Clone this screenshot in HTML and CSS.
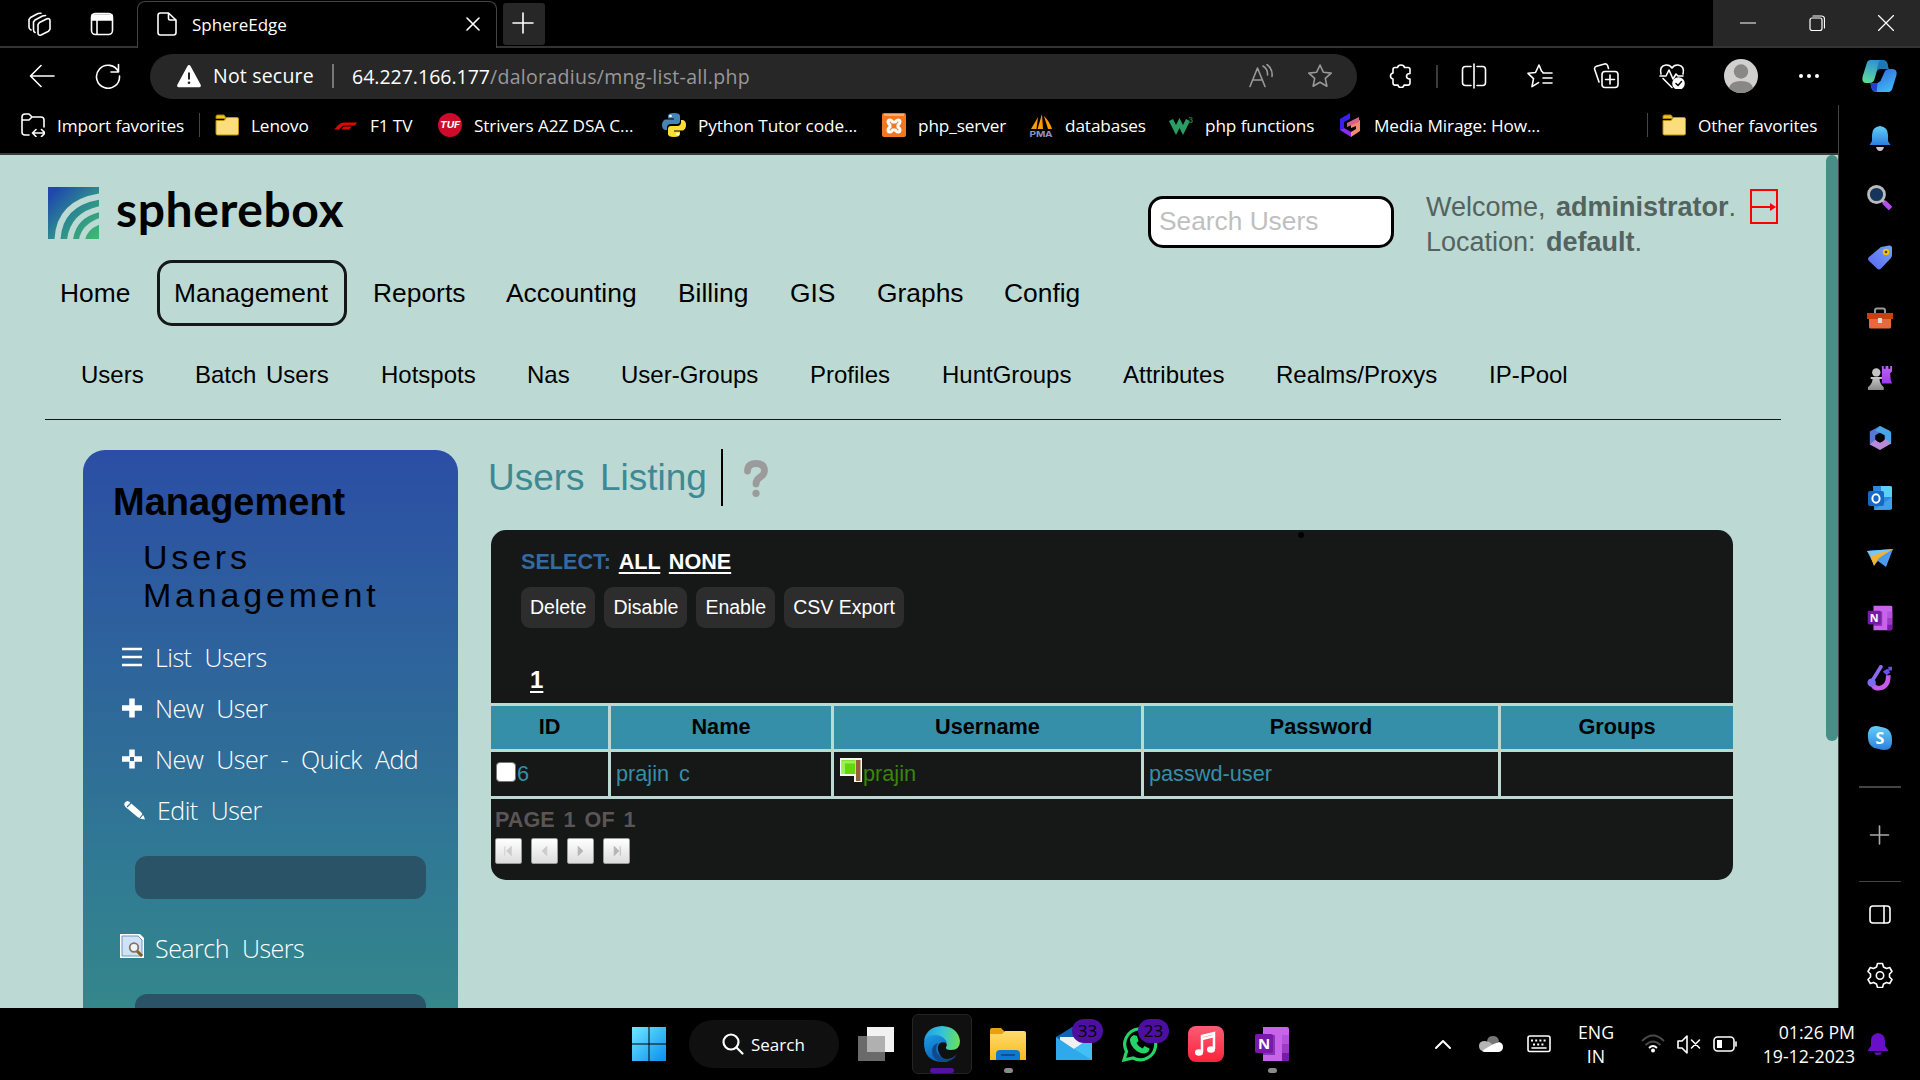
FILE: index.html
```html
<!DOCTYPE html>
<html lang="en">
<head>
<meta charset="utf-8">
<title>SphereEdge</title>
<link rel="stylesheet" href="styles.css">
</head>
<body>
<svg width="0" height="0" class="defs">
  <defs>
    <linearGradient id="gLogo" x1="0" y1="0" x2="1" y2="1"><stop offset="0.1" stop-color="#2048ac"/><stop offset="0.5" stop-color="#2b8792"/><stop offset="1" stop-color="#3fbc6c"/></linearGradient>
    <linearGradient id="gBlue" x1="0" y1="0" x2="1" y2="1"><stop offset="0" stop-color="#6fe8ff"/><stop offset="1" stop-color="#0a8df0"/></linearGradient>
    <linearGradient id="gCopA" x1="0.6" y1="0" x2="0.2" y2="1"><stop offset="0" stop-color="#2b8fd8"/><stop offset="1" stop-color="#62d99a"/></linearGradient>
    <linearGradient id="gCopB" x1="0" y1="0" x2="0.6" y2="1"><stop offset="0" stop-color="#2f61dc"/><stop offset="1" stop-color="#40b4f4"/></linearGradient>
    <linearGradient id="gBell" x1="0" y1="0" x2="0" y2="1"><stop offset="0" stop-color="#62cff8"/><stop offset="1" stop-color="#2c7fdc"/></linearGradient>
    <linearGradient id="gTag" x1="0" y1="1" x2="1" y2="0"><stop offset="0" stop-color="#5a64f0"/><stop offset="1" stop-color="#6fa4f6"/></linearGradient>
    <linearGradient id="gPurple" x1="0" y1="0" x2="0" y2="1"><stop offset="0" stop-color="#b866f0"/><stop offset="1" stop-color="#a236ee"/></linearGradient>
    <linearGradient id="gGrey" x1="0" y1="0" x2="0" y2="1"><stop offset="0" stop-color="#c8c8c8"/><stop offset="1" stop-color="#8a8a8a"/></linearGradient>
    <linearGradient id="gEdgeA" x1="0" y1="0.3" x2="1" y2="0.4"><stop offset="0" stop-color="#1d9fe0"/><stop offset="0.5" stop-color="#35c3d8"/><stop offset="1" stop-color="#6ae05a"/></linearGradient>
    <linearGradient id="gEdgeB" x1="0" y1="0" x2="0.4" y2="1"><stop offset="0" stop-color="#1b9de2"/><stop offset="1" stop-color="#0b62bd"/></linearGradient>
    <linearGradient id="gFold" x1="0" y1="0" x2="0" y2="1"><stop offset="0" stop-color="#ffdc6e"/><stop offset="1" stop-color="#f8b91c"/></linearGradient>
    <linearGradient id="gMusic" x1="0" y1="0" x2="0" y2="1"><stop offset="0" stop-color="#fb5c74"/><stop offset="1" stop-color="#fa233b"/></linearGradient>
    <symbol id="folder" viewBox="0 0 24 24"><path d="M1 5.500V3.500Q1 2 2.500 2H9l2.500 3.500z" fill="#f0c419" stroke="#a98207"/><path d="M1 7.500H9L11.500 4.500H22q1.500 0 1.500 1.500V20.500q0 1.500-1.500 1.500H2.500Q1 22 1 20.500z" fill="#fbdd7c" stroke="#b98f12"/></symbol>
    <symbol id="onenote" viewBox="0 0 36 36"><path d="M9 1h24q2 0 2 2v30q0 2-2 2H9z" fill="#c864ea"/><path d="M28 18h7v9h-7z" fill="#9a3cc4"/><path d="M28 27h7v6q0 2-2 2h-5z" fill="#7719aa"/><path d="M28 9h7v9h-7z" fill="#b552dc"/><rect x="9" y="9" width="12" height="20" fill="#5d1690" opacity=".6"/><rect x="1" y="8" width="18" height="19" rx="2" fill="#7719aa"/><text x="10" y="23" text-anchor="middle" font-size="15" font-weight="700" fill="#fff" font-family="Open Sans, sans-serif">N</text></symbol>
  </defs>
</svg>

<div class="desktop">
  <header class="tabstrip">
    <div class="tab-lead">
      <svg class="ic w24" viewBox="0 0 24 24"><path d="M12.500 10.500L20 6.800q3-.8 3 2v8.400l-1.500 2L14 23q-3 .8-3-2v-8.500zM8 20.500q-1.500-.8-1.500-3V10l1.500-2 7.500-4 3-.5M4 18q-2-.8-2-3V7.500l1.500-2L11 1.500l3-.3"/></svg>
      <svg class="ic w24" viewBox="0 0 24 24"><rect x="1.500" y="1.500" width="21" height="21" rx="4"/><path d="M2 3h20v5H2z" fill="#fff"/><path d="M7 8v14"/></svg>
    </div>
    <div class="tab">
      <svg class="ic w24" viewBox="0 0 24 24"><path d="M5.500 1h8L21 8v12.500q0 2.500-2.500 2.500h-13Q3 23 3 20.500v-17Q3 1 5.500 1zM13.500 1v5.500q0 1.500 1.500 1.500h6"/></svg>
      <span>SphereEdge</span>
      <svg class="ic w14" viewBox="0 0 14 14"><path d="M1 1l12 12M13 1L1 13"/></svg>
    </div>
    <div class="tab-rest">
      <button class="newtab"><svg class="ic w22" viewBox="0 0 22 22"><path d="M11 1v20M1 11h20"/></svg></button>
      <div class="winctl">
        <svg class="ic thin w16" viewBox="0 0 16 16"><path d="M0 8h16"/></svg>
        <svg class="ic thin w16" viewBox="0 0 16 16"><rect x="1" y="3" width="12" height="12.500" rx="2"/><path d="M4 1h8.500q3 0 3 3v9"/></svg>
        <svg class="ic thin w16" viewBox="0 0 16 16"><path d="M.5.5l15 15M15.500.5l-15 15"/></svg>
      </div>
    </div>
  </header>

  <div class="toolbar">
    <svg class="ic w26 back" viewBox="0 0 26 26"><path d="M25 13H2M12 2.500L1.500 13 12 23.500"/></svg>
    <svg class="ic w26 reload" viewBox="0 0 26 26"><path d="M23.500 9A11.500 11.500 0 1 0 24.500 13M23.500 1.500V9H16"/></svg>
    <div class="address">
      <svg class="w26 warn" viewBox="0 0 26 26"><path d="M13 2q1 0 1.500 1l10.300 19q.7 2-1.300 2.200h-21Q.5 24 1.200 22L11.500 3Q12 2 13 2z" fill="#fff"/><path d="M13 9.500v7" stroke="#222" stroke-width="2" /><circle cx="13" cy="19.800" r="1.300" fill="#222"/></svg>
      <span class="insecure">Not secure</span>
      <span class="url">64.227.166.177<i>/daloradius/mng-list-all.php</i></span>
      <svg class="ic dim w24 aloud" viewBox="0 0 24 24"><path d="M1 22.500L8.500 4 16 22.500M3.500 16h10M14 2q5 3 4.500 9M18 .5q6 4.500 5 12"/></svg>
      <svg class="ic dim w26 star" viewBox="0 0 26 26"><path d="M13 2l3.300 7.200 7.900.9-5.900 5.300 1.600 7.800L13 19.300l-6.900 3.900 1.600-7.800L1.800 10.100l7.900-.9z"/></svg>
    </div>
    <div class="tools">
      <svg class="ic w24" viewBox="0 0 24 24"><path d="M8.500 3.500q.5-2.500 3.500-2.500t3.500 2.500h3.500q2 0 2 2v4q-3.500.3-3.500 2.800t3.500 2.800v4q0 2-2 2h-4q-.4 2.500-3 2.500t-3-2.500H6q-2 0-2-2v-4q-2.500-.5-2.500-3T4 9V5.500q0-2 2-2z"/></svg>
      <i class="sep"></i>
      <svg class="ic w26" viewBox="0 0 26 26"><path d="M13 1v24M10 3.500H4.500q-3 0-3 3v13q0 3 3 3H10M16 3.500h5.500q3 0 3 3v13q0 3-3 3H16"/></svg>
      <svg class="ic w26" viewBox="0 0 26 26"><path d="M14.500 8l-2.500-6-3.500 7.500-7.500.8 5.500 5.300-1.500 8 6.500-4M16 10h9M16 15h9M16 20h9M16.500 10l-2-2"/></svg>
      <svg class="ic w26" viewBox="0 0 26 26"><rect x="9" y="8.500" width="16" height="16" rx="3"/><path d="M17 12v9M12.500 16.500h9M6 19L1.700 6.500q-.7-2.500 1.800-3.300l8-2.200q2.500-.6 3.200 1.800l.8 2.700"/></svg>
      <svg class="ic w26" viewBox="0 0 26 26"><path d="M2 11q-2-8 5-9 4-.3 6 3 2-3.300 6-3 7 1 5 9M1 13h6l3-6 4 9 3-5 2 2h5M4 15.500l9 9"/><circle cx="19.500" cy="20.500" r="5.500" fill="#fff"/><path d="M17 20.500l2 2 3.500-4" stroke="#111"/></svg>
      <svg class="avatar" viewBox="0 0 34 34"><circle cx="17" cy="17" r="17" fill="#d2d0ce"/><circle cx="17" cy="12.500" r="7.200" fill="#8a8886"/><path d="M5 29q1.500-7 12-7t12 7q-5 5-12 5T5 29z" fill="#8a8886"/></svg>
      <svg class="w22" viewBox="0 0 22 22" fill="#fff"><circle cx="3" cy="11" r="2"/><circle cx="11" cy="11" r="2"/><circle cx="19" cy="11" r="2"/></svg>
    </div>
    <svg class="copilot" viewBox="0 0 36 34"><path d="M9 1h12q4 0 5 4l1 5-7-1-4 1-3 10q-1 4-5 4H5q-5 0-4-6L5 5q1-4 4-4z" fill="url(#gCopA)"/><path d="M27 33H15q-4 0-5-4l-1-5 7 0 3-2 4-9q1-3 5-3h3q5 0 4 6l-4 13q-1 4-4 4z" fill="url(#gCopB)"/><path d="M20 1q5 0 6 4l1 5h-9l-3 2 2-8q.7-3 3-3z" fill="#1e77b0"/><path d="M9 24h7l-1 9q-4-1-5-4z" fill="#233ed0"/></svg>
  </div>

  <div class="middle">
    <div class="browser">
      <nav class="bookmarks">
        <a><svg class="ic w24" viewBox="0 0 24 24"><path d="M8 22H4q-3 0-3-3V4q0-3 3-3h4l3 3h9q3 0 3 3v7M1 7h7l3-3M12 20h12M15 16.500L11.500 20l3.500 3.500M20.500 16.500L24 20l-3.500 3.500"/></svg>Import favorites</a>
        <a><svg class="w24"><use href="#folder"/></svg>Lenovo</a>
        <a><svg class="w24" viewBox="0 0 24 24"><path d="M0 16.500L5 11.500q2-2 5-2h13l-2 3H11q-2 0-3 1l-3 3zM10 13.500h8l-3 3H7z" fill="#e10600"/></svg>F1 TV</a>
        <a><svg class="w24" viewBox="0 0 24 24"><circle cx="12" cy="12" r="12" fill="#cc0c2a"/><text x="12" y="15.300" text-anchor="middle" textLength="20" lengthAdjust="spacingAndGlyphs" font-size="9" font-style="italic" font-weight="700" fill="#fff" font-family="Inter, sans-serif">TUF</text></svg>Strivers A2Z DSA C...</a>
        <a><svg class="w24" viewBox="0 0 24 24"><path d="M12 0q6 0 6 3v5q0 3-3 3H9q-4 0-4 4v2H3q-3-1-3-5t3-5.500h9V5.500H6V3q0-3 6-3z" fill="#4584b6"/><path d="M12 24q-6 0-6-3v-5q0-3 3-3h6q4 0 4-4V7h2q3 1 3 5t-3 5.500h-9v1h6V21q0 3-6 3z" fill="#ffde33"/><circle cx="8.500" cy="3" r="1.300" fill="#fff"/><circle cx="15.500" cy="21" r="1.300" fill="#fff"/></svg>Python Tutor code...</a>
        <a><svg class="w24" viewBox="0 0 24 24"><rect width="24" height="24" rx="2" fill="#f37623"/><path d="M6 9q0-2 2-2 1.500 0 2.500 2h3q1-2 2.500-2 2 0 2 2 0 1.500-2 3v2q2 1.500 2 3 0 2-2 2-1.500 0-2.500-2h-3q-1 2-2.500 2-2 0-2-2 0-1.500 2-3v-2q-2-1.500-2-3z" fill="none" stroke="#fff" stroke-width="3" stroke-linejoin="round"/><path d="M2 2h20" stroke="#ffc08a" stroke-width="1.500"/></svg>php_server</a>
        <a><svg class="w24" viewBox="0 0 24 24"><path d="M2 16L9 4 7.500 16zM8.500 16L13 1l1 15zM15 3q6 6 8 13h-4z" fill="#f89c0e"/><text x="12" y="23.500" text-anchor="middle" textLength="23" lengthAdjust="spacingAndGlyphs" font-size="8" font-weight="700" fill="#8f92c4" font-family="Inter, sans-serif">PMA</text></svg>databases</a>
        <a><svg class="w24" viewBox="0 0 24 24"><path d="M2 7l5 10 3.500-7L14 17l5-10" fill="none" stroke="#2a9d64" stroke-width="4.500"/><text x="19" y="10" font-size="8" font-weight="700" fill="#1d7044" font-family="Inter, sans-serif">3</text></svg>php functions</a>
        <a><svg class="w24" viewBox="0 0 24 24"><path d="M11 0v6L5 9v6l-4 2V6z" fill="#3b1df5"/><path d="M1 17l4-2 7 4v5z" fill="#8b2cf5"/><path d="M12 24v-5l5-3v-3l-5 2v-4l9-4v11z" fill="#f58a6c"/><path d="M8 10l12-6v5L8 14z" fill="#d6628c"/></svg>Media Mirage: How...</a>
        <a class="other"><svg class="w24"><use href="#folder"/></svg>Other favorites</a>
      </nav>

      <main class="page">
        <div class="content">
          <div class="top">
            <div class="brand">
              <svg class="mark" viewBox="0 0 51 52"><path d="M0 0h51v52H0z" fill="url(#gLogo)"/><g fill="none" stroke="#bdd9d3" stroke-width="6"><path d="M9.500 53Q11 16 52 9.500"/><path d="M22 53Q25 28 52 22"/><path d="M34 53Q36 40 52 34"/></g></svg>
              <span>spherebox</span>
            </div>
            <div class="search">Search Users</div>
            <div class="welcome">
              <div>Welcome, <b>administrator</b>.</div>
              <div>Location: <b>default</b>.</div>
            </div>
            <svg class="logout" viewBox="0 0 28 35"><rect x="1" y="1" width="26" height="33" fill="none" stroke="#f00" stroke-width="2"/><path d="M0 18h22" stroke="#f00" stroke-width="2"/><path d="M20 14l6 4-6 4z" fill="#f00"/></svg>
          </div>
          <nav class="mainnav"><a>Home</a><a class="active">Management</a><a>Reports</a><a>Accounting</a><a>Billing</a><a>GIS</a><a>Graphs</a><a>Config</a></nav>
          <nav class="subnav"><a>Users</a><a>Batch Users</a><a>Hotspots</a><a>Nas</a><a>User-Groups</a><a>Profiles</a><a>HuntGroups</a><a>Attributes</a><a>Realms/Proxys</a><a>IP-Pool</a></nav>
          <div class="columns">
            <aside class="card">
              <h2>Management</h2>
              <h3>Users<br>Management</h3>
              <ul>
                <li><svg class="w24" viewBox="0 0 24 24"><path d="M2 4h20M2 12h20M2 20h20" stroke="#fff" stroke-width="2.500"/></svg>List Users</li>
                <li><svg class="w24" viewBox="0 0 24 24"><path d="M12 2.500v19M2 12h20" stroke="#fff" stroke-width="5.500"/></svg>New User</li>
                <li><svg class="w24" viewBox="0 0 24 24"><path d="M12 2.500v19M2 12h20" stroke="#fff" stroke-width="5.500"/><path d="M10 10h4v4h-4z" fill="#306a98"/></svg>New User - Quick Add</li>
                <li class="edit"><svg class="w24" viewBox="0 0 24 24"><path d="M2.500 5q2.500-3 4.500-1.500L19 14q3 3.500 4 7.500-5-.5-7.500-2.500L3.500 9q-2-2-1-4z" fill="#fff"/><path d="M5 9l5-5M18 20l4-5" stroke="#30709a" stroke-width="1.200"/></svg>Edit User</li>
              </ul>
              <div class="field"></div>
              <ul class="second">
                <li><svg class="w24" viewBox="0 0 24 24"><path d="M0 0h20l4 4v20H0z" fill="#fff"/><path d="M2 2h16l4 4v16H2z" fill="#cfe2f8" stroke="#6c94c0"/><path d="M17 17l5 5" stroke="#8b5a2b" stroke-width="3"/><circle cx="14" cy="13.500" r="4.300" fill="#eef5fc" stroke="#8a7260" stroke-width="1.800"/></svg>Search Users</li>
              </ul>
              <div class="field"></div>
            </aside>
            <section class="listing">
              <h1><span>Users Listing</span><svg class="help" viewBox="0 0 24 37"><path d="M3.500 11Q3.500 3.500 12 3.500t8.500 7q0 4-4.200 6.500t-4.300 7" fill="none" stroke="#9b9b9b" stroke-width="6.800" stroke-linecap="round"/><circle cx="12" cy="33.300" r="3.600" fill="#9b9b9b"/></svg></h1>
              <div class="panel">
                <div class="panelhead">
                  <div class="select">SELECT: <u>ALL</u> <u>NONE</u></div>
                  <div class="actions"><button>Delete</button><button>Disable</button><button>Enable</button><button>CSV Export</button></div>
                  <div class="pageno"><u>1</u></div>
                  <i class="dot"></i>
                </div>
                <div class="row head"><div>ID</div><div>Name</div><div>Username</div><div>Password</div><div>Groups</div></div>
                <div class="row body">
                  <div><i class="check"></i>6</div><div>prajin c</div>
                  <div class="user"><svg class="flag" viewBox="0 0 22 24"><path d="M0 0h22v24h-8v-6H0z" fill="#f4f8ee"/><path d="M1.500 2h14v14h-14z" fill="#62d80c"/><path d="M2 2.500h13v3H5V16H2z" fill="#9bee58"/><path d="M16 2h4.500v21H16z" fill="#936137"/></svg>prajin</div>
                  <div>passwd-user</div><div></div>
                </div>
                <div class="panelfoot">
                  <div>PAGE 1 OF 1</div>
                  <div class="pager">
                    <i><svg viewBox="0 0 27 26"><path d="M9.500 8v10M16.500 8v10l-5-5z"/></svg></i>
                    <i><svg viewBox="0 0 27 26"><path d="M16 8v10l-5-5z"/></svg></i>
                    <i><svg class="dk" viewBox="0 0 27 26"><path d="M11 8v10l5-5z"/></svg></i>
                    <i><svg class="dk" viewBox="0 0 27 26"><path d="M11 8v10l5-5zM17.500 8v10"/></svg></i>
                  </div>
                </div>
              </div>
            </section>
          </div>
        </div>
        <div class="scroll"><div class="thumb"></div></div>
      </main>
    </div>

    <aside class="edgebar">
      <div><svg viewBox="0 0 26 26"><path d="M13 1q8 1 8 9v6l2.500 4H2.500L5 16v-6q0-8 8-9z" fill="url(#gBell)"/><path d="M9 22h8q-1 4-4 4t-4-4z" fill="#c9c9c9"/></svg></div>
      <div><svg viewBox="0 0 26 26"><path d="M15 15l3 3" stroke="#aaa" stroke-width="3"/><path d="M17 17l6.500 6.500" stroke="#b64df2" stroke-width="5"/><circle cx="9.500" cy="9.500" r="8" fill="#15355c" stroke="#bbb" stroke-width="2.800"/></svg></div>
      <div><svg viewBox="0 0 26 26"><path d="M14 2l8-1.500q3-.3 3 2.500v7q0 2-1.500 3.500L14 23.500q-2 2-4 0L2 16q-2-2 0-4z" fill="url(#gTag)"/><circle cx="19" cy="7" r="2.300" fill="#444" stroke="#f5c400" stroke-width="2"/></svg></div>
      <div><svg viewBox="0 0 26 26"><path d="M8 9V5.500q0-2 2-2h6q2 0 2 2V9" fill="none" stroke="#9a9a9a" stroke-width="2"/><path d="M2 12h22v10q0 1.500-1.500 1.500h-19Q2 23.500 2 22z" fill="#e9683e"/><path d="M0 8h26v6H0z" fill="#c8400c"/><rect x="11" y="13" width="4" height="5" fill="#d8d8d8"/></svg></div>
      <div><svg viewBox="0 0 26 28"><path d="M15 1h2v3h2V1h3v3h2V1h2v6l-2 2 .5 7L26 20H15z" fill="url(#gPurple)"/><circle cx="9" cy="8" r="4.500" fill="#c4c4c4"/><path d="M3 13h12v2h-2.500q0 5 4.500 9v3H0v-3q5-4 5-9H3z" fill="url(#gGrey)"/></svg></div>
      <div><svg viewBox="0 0 26 28"><path d="M13 1L2 7v14l6 2V11l5-3 11 2V8z" fill="#5478d6"/><path d="M13 1l10 5q2 1 2 3v12l-7-4v-6l-10-5z" fill="#48a6e6"/><path d="M25 20l-12 7-11-6 6-5 5 3 6-4z" fill="#b98ad8"/><circle cx="13" cy="14" r="4.700" fill="#000"/></svg></div>
      <div><svg viewBox="0 0 26 26"><path d="M6 1h17q2 0 2 2v20q0 2-2 2H7z" fill="#2a8be0"/><path d="M14 1h9q2 0 2 2v9H14z" fill="#5cd0f6"/><path d="M7 25l18-13v12z" fill="#3fa0ea"/><rect x="1" y="6" width="16" height="15" rx="2" fill="#1668c4"/><ellipse cx="9" cy="13.500" rx="3.600" ry="4.200" fill="none" stroke="#fff" stroke-width="2"/></svg></div>
      <div><svg viewBox="0 0 26 26"><path d="M0 6l26-2-7 18-8-6-4 4z" fill="#4a9bf0"/><path d="M3 10L26 4 12 13l-5 8z" fill="#f2b42c"/><path d="M0 6l26-2L4 11z" fill="#7cc5f7"/></svg></div>
      <div><svg><use href="#onenote"/></svg></div>
      <div><svg viewBox="0 0 28 28"><path d="M5 15q0 10 8 10 10-1 10-14" fill="none" stroke="#c65be8" stroke-width="5"/><path d="M15 2L5 18" stroke="#8a6af0" stroke-width="4" stroke-linecap="round"/><circle cx="5" cy="19" r="4.500" fill="#7b6cf2"/><path d="M17 7l5-3 3 4-4 3zM23 2h4v4h-4z" fill="#6a4ff0"/></svg></div>
      <div><svg viewBox="0 0 26 26"><path d="M8 1q4 0 6 1 11 1 11 13 1 10-8 10-3 0-5-1Q1 23 1 12 0 2 8 1z" fill="url(#gBell)"/><text x="13" y="18.500" text-anchor="middle" font-size="16" font-weight="700" fill="#fff" font-family="Open Sans, sans-serif">S</text></svg></div>
      <hr class="thick">
      <div class="plus"><svg class="ic" viewBox="0 0 26 26"><path d="M12.500 4v18M3.500 13h18" stroke="#aaa"/></svg></div>
      <hr>
      <div class="panelic"><svg class="ic" viewBox="0 0 26 26"><rect x="3" y="4" width="20" height="17" rx="3"/><path d="M17 4v17"/></svg></div>
      <div><svg class="ic" viewBox="0 0 26 26"><path d="M10.500 1.500h5l1 3.500 3 1.500 3.200-1 2.300 4-2.500 2.500v3l2.500 2.500-2.300 4-3.200-1-3 1.500-1 3.500h-5l-1-3.500-3-1.500-3.200 1L1 17.500 3.500 15v-3L1 9.500l2.300-4 3.200 1 3-1.500z"/><circle cx="13" cy="13.500" r="3.700"/></svg></div>
    </aside>
  </div>

  <footer class="taskbar">
    <svg class="win" viewBox="0 0 36 36"><path d="M1 1h16.500v16.500H1zM18.500 1H35v16.500H18.500zM1 18.500h16.500V35H1zM18.500 18.500H35V35H18.500z" fill="url(#gBlue)"/></svg>
    <div class="tasksearch"><svg class="ic bold w22" viewBox="0 0 22 22"><circle cx="9" cy="9" r="7.500"/><path d="M14.500 14.500l6 6" /></svg>Search</div>
    <div class="apps">
      <div><svg viewBox="0 0 36 36"><path d="M9 1h27v25H9z" fill="#f2f2f2"/><path d="M0 10h27v25H0z" fill="#6a6a6a"/><path d="M9 10h18v16H9z" fill="#b0b0b0"/></svg></div>
      <div class="on"><svg viewBox="0 0 36 36"><path d="M18 0Q34 1 36 15q0 9-9 9-6 0-5-3 2-2-1-6Q14 7 0 15 2 1 18 0z" fill="url(#gEdgeA)"/><path d="M0 17Q1 9 11 9q9 0 12 8-10-3-9 7 2 8 10 12H18Q0 35 0 17z" fill="url(#gEdgeB)"/><path d="M14 17q-5 9 3 14 8 5 16-3-4 8-15 8Q8 34 8 25q0-6 6-8z" fill="#114a8b"/></svg><i class="bar"></i></div>
      <div><svg viewBox="0 0 36 36"><path d="M0 4q0-2 2-2h9l4 4v4H0z" fill="#e8a010"/><path d="M0 8h12l3-3h19q2 0 2 2v27H0z" fill="url(#gFold)"/><path d="M6 34v-6q0-4 4-4h16q4 0 4 4v6z" fill="#0f78d0"/><path d="M11 29h14" stroke="#0a4e94" stroke-width="2"/></svg><i class="pt"></i></div>
      <div><svg viewBox="0 0 36 36"><path d="M0 11L18 0l18 11v23H0z" fill="#0c64b8"/><path d="M4 11h28v10L18 26 4 17z" fill="#f0f0f0"/><path d="M36 11v23H0V11l18 12z" fill="#2fa8ec"/><path d="M36 11v23L18 23z" fill="#42c0f4"/></svg><b>33</b></div>
      <div><svg viewBox="0 0 36 36"><path d="M2 34l2.500-8.500A15.500 15.500 0 1 1 11 32z" fill="none" stroke="#25d366" stroke-width="3.200"/><path d="M12 9l3 1 1.500 5-2 2q2 4 6 5.500l2-2.500 5 2.500q0 4-5 5-6 0-10.500-5T8 13q1-3 4-4z" fill="#25d366"/></svg><b>23</b></div>
      <div><svg viewBox="0 0 36 36"><rect width="36" height="36" rx="8" fill="url(#gMusic)"/><path d="M14 26V10l12-3v16M14 13l12-3" fill="none" stroke="#fff" stroke-width="2.500"/><ellipse cx="11" cy="26.500" rx="4" ry="3.300" fill="#fff"/><ellipse cx="23" cy="23.500" rx="4" ry="3.300" fill="#fff"/></svg></div>
      <div><svg><use href="#onenote"/></svg><i class="pt"></i></div>
    </div>
    <div class="tray">
      <svg class="ic chev" viewBox="0 0 18 24"><path d="M2 16l7-7 7 7" stroke-width="2"/></svg>
      <svg class="w24 cloud" viewBox="0 0 24 24"><path d="M8 9q1-5 6-5 5 0 6 5l-6 6z" fill="#777"/><path d="M5 19q-5 0-5-5t6-5q4 0 7 3l-8 7z" fill="#b5b5b5"/><path d="M3 19l9-6 8-3q4 1 4 5t-4 5H6q-2 0-3-1z" fill="#fff"/></svg>
      <svg class="ic w24 kbd" viewBox="0 0 24 24"><rect x="1" y="4" width="22" height="15.500" rx="2"/><path d="M4 8.500h16M6 12.500h12" stroke-width="2" stroke-linecap="butt" stroke-dasharray="2 2.200"/><path d="M5 16h14"/></svg>
      <div class="lang">ENG<br>IN</div>
      <svg class="w24" viewBox="0 0 24 24" fill="none" stroke-width="1.800"><path d="M1 9q11-11 22 0M4.500 13q7.500-7 15 0" stroke="#4a4a4a"/><path d="M8 16q4-4 8 0" stroke="#fff"/><circle cx="12" cy="18.500" r="2" fill="#fff"/></svg>
      <svg class="ic w24" viewBox="0 0 24 24"><path d="M1 9h4l5-5v17l-5-5H1zM14.500 8l8 8M22.500 8l-8 8"/></svg>
      <svg class="ic w24" viewBox="0 0 24 24"><rect x="1" y="5" width="20" height="14" rx="3.500"/><path d="M4 8h5v8H4z" fill="#fff" stroke="none"/><path d="M23 10v4"/></svg>
      <div class="clock">01:26 PM<br>19-12-2023</div>
      <svg class="bell" viewBox="0 0 20 24"><path d="M10 1q7 1 7 8v5l3 4v1H0v-1l3-4V9q0-7 7-8z" fill="#6a0fc9"/><path d="M6 20.500h8q-1 2.500-4 2.500t-4-2.500z" fill="#6a0fc9"/></svg>
    </div>
  </footer>
</div>
</body>
</html>
```
FILE: styles.css
```css
* { box-sizing: border-box; }
html, body { margin: 0; height: 100%; overflow: hidden; background: #000; }
svg { display: block; flex: none; }
.defs { position: absolute; }
i { font-style: normal; }
button { border: 0; margin: 0; font: inherit; color: inherit; }

.desktop {
  display: grid;
  grid-template-rows: 48px 57px 903px 72px;
  width: 1920px;
  height: 1080px;
  color: #fff;
  font-family: "Open Sans", "Noto Sans", sans-serif;
  background: #000;
}

.ic { fill: none; stroke: #fff; stroke-width: 1.6; stroke-linecap: round; stroke-linejoin: round; }
.thin { stroke-width: 1.2; }
.bold { stroke-width: 2.2; }
.dim { stroke: #999; }
.w14 { width: 14px; height: 14px; }
.w16 { width: 16px; height: 16px; }
.w22 { width: 22px; height: 22px; }
.w24 { width: 24px; height: 24px; }
.w26 { width: 26px; height: 26px; }

/* Tab strip */
.tabstrip { display: flex; }
.tab-lead { display: flex; gap: 39px; width: 137px; padding: 12px 0 0 27px; border-bottom: 2px solid #333; }
.tab {
  display: flex;
  align-items: center;
  width: 360px;
  margin-top: 1px;
  padding: 0 16px 2px 17px;
  border: 1px solid #444;
  border-bottom: 0;
  border-radius: 8px 8px 0 0;
  font-size: 17px;
}
.tab span { flex: 1; padding-left: 13px; }
.tab-rest { display: flex; flex: 1; justify-content: space-between; border-bottom: 2px solid #333; }
.newtab {
  display: grid;
  place-items: center;
  width: 42px;
  height: 42px;
  margin: 3px 0 0 6px;
  padding: 0 2px 2px 0;
  background: #272727;
  border-radius: 3px;
}
.winctl { display: flex; align-items: center; gap: 53px; width: 207px; padding-left: 27px; background: #272727; }

/* Toolbar */
.toolbar { display: flex; align-items: center; padding: 0 22px 1px 29px; }
.reload { margin-left: 40px; }
.address {
  display: flex;
  align-items: center;
  width: 1207px;
  height: 45px;
  margin-left: 29px;
  padding: 0 24px 0 26px;
  background: #272727;
  border-radius: 23px;
  font-size: 19.500px;
  white-space: nowrap;
}
.insecure { width: 121px; margin: 0 18px 0 11px; border-right: 2px solid #777; height: 24px; line-height: 23px; letter-spacing: .2px; }
.url { flex: 1; }
.url i { color: #999; letter-spacing: .3px; }
.aloud { margin-right: 34px; }
.tools { display: flex; flex: 1; align-items: center; gap: 40px; margin-left: 32px; }
.tools .sep { width: 2px; height: 23px; margin: 0 -17px; background: #3b3b3b; }
.avatar { width: 34px; height: 34px; margin-left: -1px; }
.copilot { width: 37px; height: 34px; }

.middle { display: flex; min-height: 0; }
.browser { display: flex; flex-direction: column; width: 1838px; }

/* Bookmarks */
.bookmarks {
  display: grid;
  grid-template-columns: 194px 119px 104px 224px 220px 147px 140px 170px 308px 176px;
  align-items: center;
  height: 50px;
  padding: 0 0 8px 21px;
  border-bottom: 2px solid #3b3b3b;
  font-size: 17.200px;
  letter-spacing: -.1px;
  white-space: nowrap;
}
.bookmarks a { display: flex; align-items: center; gap: 12px; height: 24px; }
.bookmarks a:first-child { margin-right: 15px; border-right: 1px solid #444; }
.bookmarks a:nth-child(9) { gap: 11px; }
.bookmarks .other { padding-left: 14px; border-left: 1px solid #444; }

/* Page */
.page {
  display: flex;
  flex: 1;
  min-height: 0;
  overflow: hidden;
  background: #bdd9d3;
  color: #000;
  font-family: "Liberation Sans", Arial, sans-serif;
}
.content { width: 1826px; padding: 0 45px; }
.scroll { width: 12px; }
.thumb { height: 586px; background: #458f87; border-radius: 6px; }

.top { display: flex; height: 105px; padding-top: 32px; }
.brand { display: flex; width: 1103px; padding-left: 3px; font: 700 48px/48px Lato, sans-serif; letter-spacing: .6px; }
.brand span { margin: -2px 0 0 17px; }
.mark { width: 51px; height: 52px; }
.search {
  width: 246px;
  height: 52px;
  margin: 9px 0 0;
  padding-left: 8px;
  border: 3px solid #000;
  border-radius: 15px;
  background: #fff;
  color: #bfbfbf;
  font-size: 26.300px;
  line-height: 44px;
}
.welcome { width: 323px; margin: 3px 0 0 32px; color: #536360; font-size: 27px; line-height: 35px; word-spacing: 3px; white-space: nowrap; }
.logout { width: 28px; height: 35px; margin-top: 2px; margin-left: 1px; }

.mainnav {
  display: grid;
  grid-template-columns: 97px 216px 133px 172px 112px 87px 127px 100px;
  height: 66px;
  padding-left: 15px;
  font-size: 26.400px;
  line-height: 66px;
}
.active { width: 190px; height: 66px; padding-left: 14px; border: 3px solid #151817; border-radius: 15px; line-height: 60px; }

.subnav {
  display: grid;
  grid-template-columns: 114px 186px 146px 94px 189px 132px 181px 153px 213px 100px;
  height: 94px;
  padding: 32px 0 0 36px;
  border-bottom: 1px solid #111817;
  font-size: 24px;
  line-height: 34px;
  word-spacing: 3px;
  white-space: nowrap;
}

.columns { display: flex; padding: 30px 0 0 38px; }
.card {
  width: 375px;
  height: 900px;
  padding: 30px 32px 0 30px;
  border-radius: 22px;
  background: linear-gradient(#2b4ea5 0, #2f6c98 291px, #307a94 416px, #34878b 558px);
}
.card h2 { margin: 0; font-size: 38px; line-height: 44px; }
.card h3 { margin: 14px 0 0 30px; font-size: 34px; font-weight: 400; line-height: 38px; letter-spacing: 3.800px; }
.card ul { margin: 17px 0 0; padding: 0 0 0 7px; list-style: none; color: #fff; font: 300 25px/50px "Open Sans", sans-serif; letter-spacing: -.5px; word-spacing: 7px; white-space: nowrap; }
.card li { display: flex; align-items: center; gap: 11px; height: 51px; }
.card .second { margin-top: 23px; }
.card .second svg { margin-top: -4px; }
.card .edit { padding-left: 2px; }
.field { width: 291px; height: 43px; margin: 21px 0 0 22px; border-radius: 12px; background: #2b5367; }

.listing { width: 1242px; margin: -1px 0 0 33px; }
.listing h1 { display: flex; height: 57px; margin: 0 0 24px -3px; color: #3d8994; font-size: 37px; font-weight: 400; line-height: 57px; word-spacing: 5px; }
.listing h1 span { width: 235px; border-right: 2px solid #000; }
.help { width: 24px; height: 37px; margin: 11px 0 0 21px; }
.panel { display: grid; gap: 3px; }
.panelhead { position: relative; height: 173px; padding: 17px 30px 0; border-radius: 15px 15px 0 0; background: #151817; }
.dot { position: absolute; left: 807px; top: 2px; width: 6px; height: 6px; border-radius: 3px; background: #000; }
.select { color: #356a9e; font-size: 21.600px; font-weight: 700; line-height: 30px; word-spacing: 2.500px; }
.panel u { color: #fff; text-underline-offset: 3px; text-decoration-thickness: 2px; text-decoration-skip-ink: none; }
.actions { display: flex; gap: 9px; margin-top: 10px; }
.actions button { height: 41px; padding: 0 9px; border-radius: 9px; background: #2d2d2d; color: #fff; font-size: 19.500px; }
.pageno { margin-top: 36px; padding-left: 9px; font-size: 24px; font-weight: 700; line-height: 32px; }
.row { display: grid; grid-template-columns: 117px 220px 307px 354px 1fr; gap: 3px; font-size: 21.700px; }
.head div { height: 43px; background: #358fa9; font-weight: 700; line-height: 42px; text-align: center; }
.body div { display: flex; align-items: center; height: 44px; padding-left: 5px; background: #151817; color: #358fa9; word-spacing: 4px; }
.body .user { color: #3c8509; }
.check { width: 20px; height: 20px; margin: -5px 1px 0 0; border: 1px solid #777; border-radius: 4px; background: #fff; }
.flag { width: 22px; height: 24px; margin: -8px 1px 0 1px; }
.panelfoot { height: 81px; padding: 6px 4px; border-radius: 0 0 15px 15px; background: #151817; color: #5c5554; font-size: 21.600px; font-weight: 700; line-height: 30px; word-spacing: 3px; }
.pager { display: flex; gap: 9px; margin-top: 3px; }
.pager i { width: 27px; height: 26px; border: 1px solid #999; border-radius: 2px; background: linear-gradient(#fff, #dcdcdc); }
.pager svg { width: 25px; height: 24px; fill: #ccc; stroke: #ccc; }
.pager .dk { fill: #b5b5b5; stroke: #b5b5b5; }

/* Browser side bar */
.edgebar { width: 82px; padding-top: 3px; border-left: 1px solid #444; }
.edgebar div { display: grid; place-items: center; height: 60px; }
.edgebar svg { width: 26px; height: 26px; }
.edgebar hr { width: 42px; height: 1px; margin: 0 auto; border: 0; background: #444; }
.edgebar .thick { height: 2px; margin-top: 18px; }
.edgebar .plus { height: 93px; }
.edgebar .panelic { margin-top: 3px; }

/* Taskbar */
.taskbar { display: flex; align-items: center; padding-left: 631px; }
.win { width: 36px; height: 36px; }
.tasksearch { display: flex; align-items: center; gap: 7px; width: 150px; height: 48px; margin: 0 20px 0 22px; padding-left: 33px; border-radius: 24px; background: #101010; font-size: 17px; }
.apps { display: flex; gap: 6px; margin-left: -13px; }
.apps div { position: relative; display: grid; place-items: center; width: 60px; height: 60px; }
.apps .on { border: 1px solid #242424; border-radius: 6px; background: #101010; }
.apps svg { width: 36px; height: 36px; }
.apps b { position: absolute; right: 1px; top: 5px; width: 31px; height: 24px; border-radius: 12px; background: #4d0fa0; color: #000; font-size: 17px; font-weight: 400; line-height: 24px; text-align: center; }
.bar, .pt { position: absolute; bottom: 0; width: 24px; height: 5px; border-radius: 3px; background: #5511a3; }
.pt { width: 9px; bottom: 1px; background: #8a8a8a; }
.tray { display: flex; flex: 1; align-items: center; margin-left: 132px; font-size: 17.700px; line-height: 24px; }
.chev { width: 18px; height: 24px; }
.cloud { margin-left: 27px; }
.kbd { margin-left: 24px; }
.lang { width: 90px; text-align: center; }
.lang ~ .w24 { margin-right: 12px; }
.clock { width: 106px; margin-top: -1px; text-align: right; }
.bell { width: 20px; height: 24px; margin-left: 13px; }
```
